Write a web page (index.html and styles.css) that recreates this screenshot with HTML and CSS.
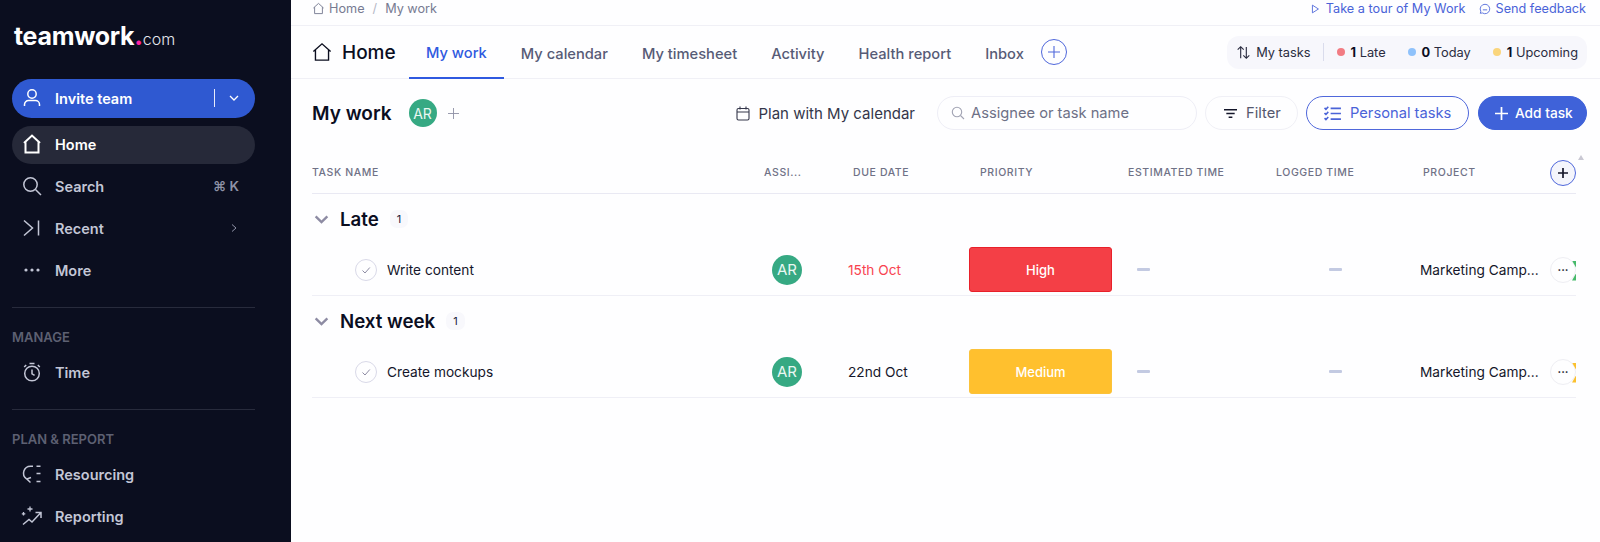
FILE: index.html
```html
<!DOCTYPE html>
<html lang="en">
<head>
  <meta charset="UTF-8">
  <title>My work - Teamwork</title>
  <link rel="stylesheet" href="styles.css">
</head>
<body>
  <div class="app">

    <!-- Sidebar -->
    <aside class="sidebar">
      <div class="logo">teamwork<span class="logo-dot">.</span><span class="logo-com">com</span></div>

      <div class="invite">
        <svg class="nav-icon" viewBox="0 0 22 22" fill="none" stroke="currentColor" stroke-width="1.5"><circle cx="11" cy="7" r="4.2"/><path d="M3.5 19v-1.5a4 4 0 0 1 4-4h7a4 4 0 0 1 4 4V19"/></svg>
        <span class="invite-label">Invite team</span>
        <span class="invite-sep"></span>
        <svg class="invite-caret" viewBox="0 0 12 12" fill="none" stroke="currentColor" stroke-width="1.3"><path d="M2 4l4 4 4-4"/></svg>
      </div>

      <nav class="nav">
        <a class="nav-item active">
          <svg class="nav-icon" viewBox="0 0 22 22" fill="none" stroke="currentColor" stroke-width="2"><path d="M3 10l8-7.5L19 10M4.5 9v10.5h13V9"/></svg>
          Home
        </a>
        <a class="nav-item">
          <svg class="nav-icon" viewBox="0 0 22 22" fill="none" stroke="currentColor" stroke-width="1.5"><circle cx="9.5" cy="9.5" r="6.7"/><path d="M14.5 14.5l5.5 5.5"/></svg>
          Search
          <span class="nav-hint">⌘ K</span>
        </a>
        <a class="nav-item">
          <svg class="nav-icon" viewBox="0 0 22 22" fill="none" stroke="currentColor" stroke-width="1.5"><path d="M3 3.5l8.5 7.5L3 18.5M17.5 3.5v15"/></svg>
          Recent
          <svg class="nav-arrow" viewBox="0 0 10 10" fill="none" stroke="currentColor" stroke-width="1"><path d="M3 1.5L7 5l-4 3.5"/></svg>
        </a>
        <a class="nav-item">
          <svg class="nav-icon" viewBox="0 0 22 22" fill="currentColor"><circle cx="5" cy="11" r="1.6"/><circle cx="11" cy="11" r="1.6"/><circle cx="17" cy="11" r="1.6"/></svg>
          More
        </a>
      </nav>

      <div class="nav-section">
        <div class="nav-title">MANAGE</div>
        <a class="nav-item">
          <svg class="nav-icon" viewBox="0 0 22 22" fill="none" stroke="currentColor" stroke-width="1.5"><circle cx="11" cy="12.5" r="7.3"/><path d="M11 8.5v4.3l2.6 1.6M8.5 2.5h5M3.2 6l2-2M18.8 6l-2-2"/></svg>
          Time
        </a>
      </div>

      <div class="nav-section">
        <div class="nav-title">PLAN &amp; REPORT</div>
        <a class="nav-item">
          <svg class="nav-icon" viewBox="0 0 22 22" fill="none" stroke="currentColor" stroke-width="1.5"><path d="M12 3.2H9.5a7 7 0 0 0-4 12.7M9.5 19.5l-3.7-3.4 4.2-1.6M15.5 3.2h4M15.5 10.5h4M15.5 18.5h4"/></svg>
          Resourcing
        </a>
        <a class="nav-item">
          <svg class="nav-icon" viewBox="0 0 22 22" fill="none" stroke="currentColor" stroke-width="1.5"><path d="M2 19.5l6-5 3 2.5 8.5-9M14.5 7.5h5.500v5.500"/><path d="M9 1.500v5M6.500 4h5M2.500 7v3.500M.8 8.800h3.500" stroke-width="1.300"/></svg>
          Reporting
        </a>
      </div>
    </aside>

    <!-- Main content -->
    <main class="main">
      <div class="breadcrumb">
        <svg class="crumb-icon" viewBox="0 0 14 14" fill="none" stroke="currentColor" stroke-width="1"><path d="M1.500 6.500L7 1.500l5.500 5M2.800 5.500v7h8.400v-7"/></svg>
        <span>Home</span>
        <span class="crumb-sep">/</span>
        <span>My work</span>
        <div class="top-links">
          <a class="top-link">
            <svg class="crumb-icon" viewBox="0 0 14 14" fill="none" stroke="currentColor" stroke-width="1"><path d="M4 2.500l7 4.500-7 4.500z"/></svg>
            Take a tour of My Work
          </a>
          <a class="top-link">
            <svg class="crumb-icon" viewBox="0 0 14 14" fill="none" stroke="currentColor" stroke-width="1"><path d="M7 1.500a5.500 5.500 0 1 1-3 10.100l-2.500.4.600-2.300A5.500 5.500 0 0 1 7 1.500zM4.500 8h5"/></svg>
            Send feedback
          </a>
        </div>
      </div>

      <div class="tabbar">
        <div class="page-title">
          <svg class="title-icon" viewBox="0 0 22 22" fill="none" stroke="currentColor" stroke-width="1.500"><path d="M1.500 10.500L11 2l9.500 8.500M3.800 8.500v11.500h14.400V8.500"/></svg>
          Home
        </div>
        <a class="tab active">My work</a>
        <a class="tab">My calendar</a>
        <a class="tab">My timesheet</a>
        <a class="tab">Activity</a>
        <a class="tab">Health report</a>
        <a class="tab">Inbox</a>
        <button class="tab-add">
          <svg viewBox="0 0 14 14" fill="none" stroke="currentColor" stroke-width="1.100"><path d="M7 1v12M1 7h12"/></svg>
        </button>

        <div class="status">
          <svg class="status-icon" viewBox="0 0 16 16" fill="none" stroke="currentColor" stroke-width="1.200"><path d="M5 14V2M1.800 5L5 1.800 8.200 5M11 2v12M7.800 11l3.200 3.200 3.200-3.200"/></svg>
          <span class="status-name">My tasks</span>
          <span class="status-sep"></span>
          <span class="status-item"><i class="dot dot-late"></i><b>1</b> Late</span>
          <span class="status-item"><i class="dot dot-today"></i><b>0</b> Today</span>
          <span class="status-item"><i class="dot dot-upcoming"></i><b>1</b> Upcoming</span>
        </div>
      </div>

      <div class="toolbar">
        <h1 class="work-title">My work</h1>
        <span class="avatar avatar-sm">AR</span>
        <svg class="work-add" viewBox="0 0 12 12" fill="none" stroke="currentColor" stroke-width="1"><path d="M6 0v12M0 6h12"/></svg>

        <a class="plan-link">
          <svg class="plan-icon" viewBox="0 0 14 15" fill="none" stroke="currentColor" stroke-width="1.100"><rect x="1" y="2.500" width="12" height="11.500" rx="1.500"/><path d="M1 6h12M4 .5v3M10 .5v3"/></svg>
          Plan with My calendar
        </a>
        <div class="search">
          <svg class="search-icon" viewBox="0 0 14 14" fill="none" stroke="currentColor" stroke-width="1.100"><circle cx="6" cy="6" r="4.700"/><path d="M9.500 9.500l3.500 3.500"/></svg>
          Assignee or task name
        </div>
        <button class="btn btn-filter">
          <svg class="btn-icon" viewBox="0 0 14 14" fill="none" stroke="#14162a" stroke-width="1.700"><path d="M0 3h14M2.500 7h9M5 11h4"/></svg>
          Filter
        </button>
        <button class="btn btn-personal">
          <svg class="btn-icon-lg" viewBox="0 0 18 16" fill="none" stroke="currentColor" stroke-width="1.700"><path d="M7 2.500h11M7 8h11M7 14h11M.5 2l1.500 1.500L4.500 .8M.5 7.500L2 9l2.500-2.700M.5 13L2 14.500l2.500-2.700"/></svg>
          Personal tasks
        </button>
        <button class="btn btn-add">
          <svg class="btn-icon" viewBox="0 0 12 12" fill="none" stroke="currentColor" stroke-width="1.600"><path d="M6 0v12M0 6h12"/></svg>
          Add task
        </button>
      </div>

      <div class="table">
        <div class="table-row table-head">
          <div class="th">TASK NAME</div>
          <div class="th th-assignee">ASSI...</div>
          <div class="th th-due">DUE DATE</div>
          <div class="th th-priority">PRIORITY</div>
          <div class="th th-time">ESTIMATED TIME</div>
          <div class="th th-time">LOGGED TIME</div>
          <div class="th th-project">PROJECT</div>
          <div class="th-add">
            <svg viewBox="0 0 12 12" fill="none" stroke="currentColor" stroke-width="1.700"><path d="M6 1v10M1 6h10"/></svg>
          </div>
        </div>

        <div class="group-head">
          <svg class="group-caret" viewBox="0 0 16 10" fill="none" stroke="currentColor" stroke-width="2.600"><path d="M1.500 1.500L8 8l6.500-6.500"/></svg>
          <span class="group-name">Late</span>
          <span class="group-count">1</span>
        </div>
        <div class="table-row task">
          <div class="task-name">
            <span class="check"><svg viewBox="0 0 10 10" fill="none" stroke="currentColor" stroke-width="1"><path d="M1.500 5.500L4 8l4.800-5.500"/></svg></span>
            Write content
          </div>
          <div class="cell-assignee"><span class="avatar">AR</span></div>
          <div class="due due-late">15th Oct</div>
          <div class="chip chip-high">High</div>
          <div class="cell-est"><span class="dash"></span></div>
          <div class="cell-log"><span class="dash"></span></div>
          <div class="project">Marketing Camp...</div>
          <div class="cell-more"><span class="more more-green">···</span></div>
        </div>

        <div class="group-head">
          <svg class="group-caret" viewBox="0 0 16 10" fill="none" stroke="currentColor" stroke-width="2.600"><path d="M1.500 1.500L8 8l6.500-6.500"/></svg>
          <span class="group-name">Next week</span>
          <span class="group-count">1</span>
        </div>
        <div class="table-row task">
          <div class="task-name">
            <span class="check"><svg viewBox="0 0 10 10" fill="none" stroke="currentColor" stroke-width="1"><path d="M1.500 5.500L4 8l4.800-5.500"/></svg></span>
            Create mockups
          </div>
          <div class="cell-assignee"><span class="avatar">AR</span></div>
          <div class="due">22nd Oct</div>
          <div class="chip chip-medium">Medium</div>
          <div class="cell-est"><span class="dash"></span></div>
          <div class="cell-log"><span class="dash"></span></div>
          <div class="project">Marketing Camp...</div>
          <div class="cell-more"><span class="more more-amber">···</span></div>
        </div>
      </div>

      <div class="scroll-arrow"></div>
    </main>
  </div>
</body>
</html>
```

FILE: styles.css
```css
* {
  box-sizing: border-box;
  font-family: 'Inter', 'Liberation Sans', sans-serif;
}

html, body {
  height: 100%;
}

body {
  margin: 0;
  background-color: #fefeff;
  overflow: hidden;
}

a {
  display: block;
}

.app {
  display: flex;
  height: 542px;
}

/* Sidebar */
.sidebar {
  width: 291px;
  flex-shrink: 0;
  padding: 0 36px 0 12px;
  background-color: #0b0e1f;
  color: #c3c6d6;
  overflow: hidden;
}

.logo {
  height: 79px;
  padding: 20px 0 0 2px;
  color: white;
  font-size: 25px;
  font-weight: 700;
  line-height: 32px;
  letter-spacing: -0.3px;
}

.logo-dot {
  color: #ff22a1;
  font-weight: 800;
}

.logo-com {
  font-size: 16px;
  font-weight: 300;
  letter-spacing: 0;
  color: #e5e6ee;
}

.invite {
  display: flex;
  align-items: center;
  height: 39px;
  margin-bottom: 8px;
  padding: 0 15px 1px 9px;
  border-radius: 20px;
  background-color: #2f59d1;
  color: white;
  font-size: 14.5px;
  font-weight: 600;
}

.invite-label {
  margin-left: 12px;
  flex: 1;
}

.invite-sep {
  width: 1px;
  height: 18px;
  margin-right: 13px;
  background-color: #e8ecfb;
}

.invite-caret {
  width: 12px;
  height: 12px;
}

.nav-icon {
  width: 22px;
  height: 22px;
  flex-shrink: 0;
}

.nav {
  display: flex;
  flex-direction: column;
  gap: 4px;
  padding-bottom: 17px;
}

.nav-item {
  display: flex;
  align-items: center;
  gap: 12px;
  height: 38px;
  padding: 0 16px 2px 9px;
  border-radius: 19px;
  font-size: 14.5px;
  font-weight: 600;
}

.nav-item.active {
  background-color: #262939;
  color: white;
}

.nav-hint {
  margin-left: auto;
  font-size: 13.5px;
  color: #8f92a6;
}

.nav-arrow {
  width: 10px;
  height: 10px;
  margin-left: auto;
  color: #8f92a6;
}

.nav-section {
  display: flex;
  flex-direction: column;
  gap: 4px;
  padding-top: 21px;
  padding-bottom: 17px;
  border-top: 1px solid #282b3c;
}

.nav-title {
  height: 16px;
  margin-bottom: 5px;
  color: #5d6072;
  font-size: 13px;
  font-weight: 600;
  line-height: 16px;
}

/* Main */
.main {
  position: relative;
  flex: 1;
  min-width: 0;
}

.breadcrumb {
  display: flex;
  align-items: center;
  height: 26px;
  padding: 0 14px 8px 21px;
  border-bottom: 1px solid #f0f0f6;
  color: #777b92;
  font-size: 12.7px;
}

.crumb-icon {
  width: 13px;
  height: 13px;
  margin-right: 4px;
}

.crumb-sep {
  margin: 0 8px;
  color: #b5b7c6;
}

.top-links {
  display: flex;
  gap: 13px;
  margin-left: auto;
  color: #4a63d8;
}

.top-link {
  display: flex;
  align-items: center;
}

.top-link .crumb-icon {
  width: 12px;
  height: 12px;
  margin-right: 5px;
}

.tabbar {
  display: flex;
  align-items: center;
  height: 53px;
  padding: 0 13px 0 21px;
  border-bottom: 1px solid #f0f0f6;
}

.page-title {
  display: flex;
  align-items: center;
  gap: 10px;
  width: 97px;
  color: #0b0e1f;
  font-size: 19px;
  font-weight: 500;
}

.title-icon {
  width: 20px;
  height: 20px;
}

.tab {
  display: flex;
  align-items: center;
  height: 52px;
  padding: 2px 17px 0;
  margin-bottom: -1px;
  color: #575b76;
  font-size: 14.7px;
  font-weight: 500;
}

.tab.active {
  color: #2f59e0;
  border-bottom: 2px solid #2f59e0;
}

.tab-add {
  width: 26px;
  height: 26px;
  padding: 5px;
  border: 1px solid #4f67db;
  border-radius: 50%;
  background: none;
  color: #4f67db;
}

.tab-add svg {
  display: block;
}

.status {
  display: flex;
  align-items: center;
  height: 33px;
  margin-left: auto;
  padding: 0 9px;
  border-radius: 12px;
  background-color: #f7f7fc;
  color: #2a2c40;
  font-size: 12.8px;
}

.status-icon {
  width: 15px;
  height: 15px;
  margin-right: 5px;
}

.status-sep {
  width: 1px;
  height: 18px;
  margin: 0 13px 0 12px;
  background-color: #dadcec;
}

.status-item {
  display: flex;
  align-items: center;
  margin-right: 22px;
  white-space: pre;
}

.status-item:last-child {
  margin-right: 0;
}

.status-item b {
  font-weight: 700;
  color: #0b0e1f;
}

.dot {
  width: 8px;
  height: 8px;
  margin-right: 6px;
  border-radius: 50%;
}

.dot-late { background-color: #f27c83; }
.dot-today { background-color: #8fc2fb; }
.dot-upcoming { background-color: #fad57c; }

.toolbar {
  display: flex;
  align-items: center;
  height: 70px;
  padding: 0 13px 2px 21px;
}

.work-title {
  margin: 0 17px 0 0;
  color: #0b0e1f;
  font-size: 19px;
  font-weight: 600;
}

.avatar {
  display: flex;
  align-items: center;
  justify-content: center;
  width: 30px;
  height: 30px;
  border-radius: 50%;
  background-color: #36a983;
  color: #e9f7f2;
  font-size: 15px;
}

.avatar-sm {
  width: 28px;
  height: 28px;
  font-size: 14px;
}

.work-add {
  width: 11px;
  height: 11px;
  margin-left: 11px;
  color: #8f92a6;
}

.plan-link {
  display: flex;
  align-items: center;
  gap: 8px;
  margin-left: auto;
  margin-right: 22px;
  color: #34364a;
  font-size: 15px;
}

.plan-icon {
  width: 14px;
  height: 15px;
}

.search {
  display: flex;
  align-items: center;
  gap: 6px;
  width: 260px;
  height: 34px;
  margin-right: 8px;
  padding-left: 13px;
  border: 1px solid #eeeef6;
  border-radius: 17px;
  color: #6d7086;
  font-size: 14.7px;
}

.search-icon {
  width: 14px;
  height: 14px;
  color: #a2a4b4;
}

.btn {
  display: flex;
  align-items: center;
  height: 34px;
  padding: 0;
  border-radius: 17px;
  background: none;
  font-size: 14.7px;
  white-space: nowrap;
}

.btn-icon {
  width: 13px;
  height: 13px;
}

.btn-icon-lg {
  width: 17px;
  height: 15px;
}

.btn-filter {
  gap: 9px;
  width: 93px;
  margin-right: 8px;
  padding-left: 18px;
  border: 1px solid #f0f0f6;
  color: #55586e;
}

.btn-personal {
  gap: 9px;
  width: 163px;
  margin-right: 9px;
  padding-left: 17px;
  border: 1px solid #4f67db;
  color: #4a63d8;
}

.btn-add {
  gap: 7px;
  width: 109px;
  padding-left: 16px;
  border: 1px solid #3f62d9;
  background-color: #3f62d9;
  color: white;
  font-size: 13.7px;
  font-weight: 500;
}

/* Table */
.table {
  width: 1264px;
  margin-left: 21px;
  overflow: hidden;
}

.table-row {
  display: grid;
  grid-template-columns: 447px 89px 121px 151px 148px 148px 130px 30px;
  align-items: center;
}

.table-head {
  height: 45px;
  padding-top: 3px;
  border-bottom: 1px solid #e9e9f3;
}

.th {
  color: #6f7186;
  font-size: 10.5px;
  font-weight: 500;
  letter-spacing: 0.6px;
  white-space: nowrap;
}

.th-assignee { padding-left: 5px; }
.th-due { padding-left: 5px; }
.th-priority { padding-left: 11px; }
.th-time { padding-left: 8px; }
.th-project { padding-left: 7px; }

.th-add {
  width: 26px;
  height: 26px;
  margin-left: 4px;
  padding: 6px;
  border: 1px solid #4f67db;
  border-radius: 50%;
  background-color: #f4f5fc;
  color: #14162a;
}

.th-add svg {
  display: block;
}

.group-head {
  display: flex;
  align-items: center;
  height: 50px;
}

.group-caret {
  width: 15px;
  height: 9px;
  margin: 0 11px 0 2px;
  color: #8d8ba3;
}

.group-name {
  color: #0b0e1f;
  font-size: 18.7px;
  font-weight: 600;
}

.group-count {
  margin-left: 11px;
  padding: 2px 7px;
  border-radius: 7px;
  background-color: #f8f8fc;
  color: #20223a;
  font-size: 11px;
}

.task {
  height: 52px;
  border-bottom: 1px solid #efeff6;
  color: #14162a;
  font-size: 13.7px;
}

.task-name {
  display: flex;
  align-items: center;
  gap: 10px;
  padding-left: 43px;
}

.check {
  width: 22px;
  height: 22px;
  padding: 5px;
  border: 1px solid #d9d9e8;
  border-radius: 50%;
  color: #8d8ba3;
}

.check svg {
  display: block;
}

.cell-assignee {
  padding-left: 13px;
}

.due-late {
  color: #f8434f;
}

.chip {
  display: flex;
  align-items: center;
  justify-content: center;
  width: 143px;
  height: 45px;
  border-radius: 3px;
  color: white;
  font-size: 13px;
  font-weight: 500;
}

.chip-high {
  border: 1px solid #e8202a;
  background-color: #f43f46;
}

.chip-medium {
  border: 1px solid #fbc23a;
  background-color: #ffc02e;
}

.dash {
  display: block;
  width: 13px;
  height: 3px;
  border-radius: 1px;
  background-color: #c3cae2;
}

.cell-est {
  padding-left: 17px;
}

.cell-log {
  padding-left: 61px;
}

.project {
  padding-left: 4px;
  white-space: nowrap;
}

.cell-more {
  margin-left: 4px;
}

.more {
  position: relative;
  display: flex;
  align-items: center;
  justify-content: center;
  width: 26px;
  height: 26px;
  border: 1px solid #eeeef3;
  border-radius: 50%;
  color: #14162a;
  font-size: 11px;
  font-weight: 700;
}

/* coloured corners of the next column, clipped by the table edge */
.more::before,
.more::after {
  content: "";
  position: absolute;
  right: -1px;
  width: 4px;
  height: 7px;
}

.more::before {
  top: 3px;
  clip-path: polygon(0 0, 100% 0, 100% 100%);
}

.more::after {
  bottom: 1px;
  clip-path: polygon(100% 0, 100% 100%, 0 100%);
}

.more-green::before,
.more-green::after { background-color: #46b96a; }

.more-amber::before,
.more-amber::after { background-color: #fbc02d; }

.scroll-arrow {
  position: absolute;
  top: 155px;
  left: 1287px;
  width: 0;
  height: 0;
  border-left: 3.5px solid transparent;
  border-right: 3.5px solid transparent;
  border-bottom: 5px solid #c9c8d3;
}
```
